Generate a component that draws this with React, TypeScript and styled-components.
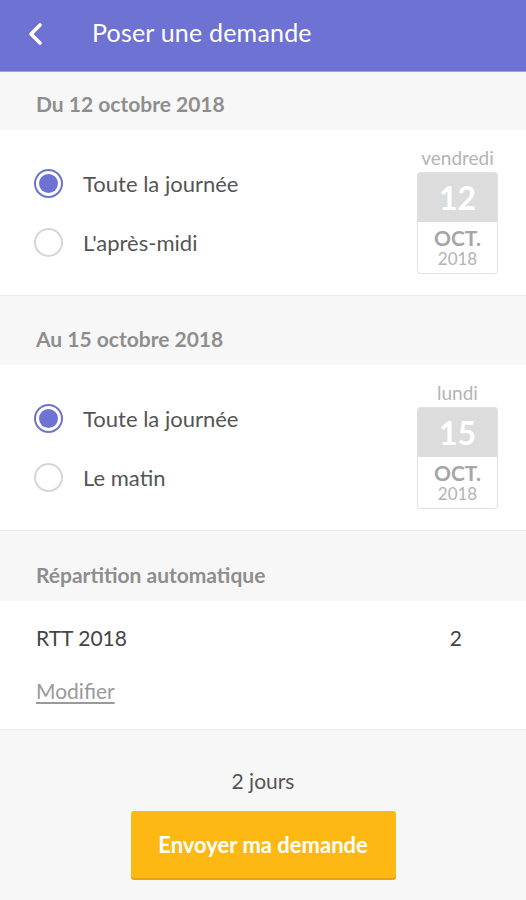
import React from "react";
import styled, { createGlobalStyle } from "styled-components";

const Global = createGlobalStyle`
  html, body { margin: 0; padding: 0; background: #f7f7f7; }
  body { font-family: "Lato", "Noto Sans", sans-serif; -webkit-font-smoothing: antialiased; }
  * { box-sizing: border-box; }
`;

const Page = styled.div`
  width: 526px;
  height: 900px;
  display: flex;
  flex-direction: column;
  background: #f7f7f7;
  overflow: hidden;
`;

const Header = styled.header`
  height: 72px;
  background: #6e72d2;
  border-bottom: 1px solid #9ea1e2;
  display: flex;
  align-items: center;
  padding-left: 26px;
  gap: 48px;
  color: #fff;
`;

const Title = styled.h1`
  margin: 0;
  font-size: 25px;
  font-weight: 400;
  letter-spacing: 0.2px;
  padding-bottom: 7px;
`;

const BackIcon = styled.svg`
  width: 18px;
  height: 24px;
  margin-bottom: 4px;
`;

const SectionTitle = styled.div<{ $h: number }>`
  height: ${(p) => p.$h}px;
  display: flex;
  align-items: flex-end;
  padding: 0 36px 14px;
  font-size: 21px;
  line-height: 24px;
  font-weight: 700;
  color: #8e8e8e;
`;

const DayCard = styled.section`
  background: #fff;
  height: 166px;
  display: flex;
  align-items: stretch;
  justify-content: space-between;
  padding: 0 28px 0 34px;
  border-bottom: 1px solid #ececec;
`;

const Options = styled.div`
  display: flex;
  flex-direction: column;
  justify-content: center;
  gap: 29px;
  padding-top: 1px;
`;

const Option = styled.label`
  display: flex;
  align-items: center;
  gap: 20px;
  font-size: 22px;
  color: #555;
  height: 30px;
`;

const Radio = styled.span<{ $checked?: boolean }>`
  width: 29px;
  height: 29px;
  border-radius: 50%;
  border: 2px solid ${(p) => (p.$checked ? "#6e72d2" : "#d6d6d6")};
  display: flex;
  align-items: center;
  justify-content: center;
  &::after {
    content: "";
    width: 19px;
    height: 19px;
    border-radius: 50%;
    background: ${(p) => (p.$checked ? "#6e72d2" : "transparent")};
  }
`;

const CalWrap = styled.div`
  display: flex;
  flex-direction: column;
  align-items: center;
  padding-top: 16px;
`;

const WeekDay = styled.div`
  font-size: 19px;
  color: #b4b4b4;
  line-height: 24px;
`;

const Cal = styled.div`
  width: 81px;
  border: 1px solid #e2e2e2;
  border-radius: 3px;
  overflow: hidden;
  margin-top: 2px;
  display: flex;
  flex-direction: column;
`;

const CalDay = styled.div`
  height: 49px;
  background: #dcdcdc;
  color: #fff;
  font-size: 32px;
  font-weight: 700;
  display: flex;
  align-items: center;
  justify-content: center;
`;

const CalMonth = styled.div`
  font-size: 21px;
  font-weight: 700;
  color: #a6a6a6;
  text-align: center;
  line-height: 22px;
  padding-top: 5px;
`;

const CalYear = styled.div`
  font-size: 17px;
  color: #b4b4b4;
  text-align: center;
  line-height: 20px;
  padding-bottom: 4px;
`;

const Split = styled.section`
  background: #fff;
  height: 129px;
  padding: 24px 64px 0 36px;
  display: flex;
  flex-direction: column;
  gap: 27px;
  border-bottom: 1px solid #ececec;
`;

const SplitRow = styled.div`
  display: flex;
  justify-content: space-between;
  font-size: 21px;
  line-height: 26px;
  color: #444;
`;

const Link = styled.a`
  font-size: 21px;
  line-height: 26px;
  color: #9a9a9a;
  text-decoration: underline;
  text-underline-offset: 3px;
`;

const Footer = styled.div`
  flex: 1;
  display: flex;
  flex-direction: column;
  align-items: center;
  padding-top: 38px;
`;

const Total = styled.div`
  font-size: 21px;
  color: #555;
  line-height: 26px;
`;

const Submit = styled.button`
  margin-top: 17px;
  width: 265px;
  height: 67px;
  border: none;
  border-radius: 3px;
  background: #fdb813;
  box-shadow: 0 2px 0 #eaa30a;
  color: #fff;
  font-family: inherit;
  font-size: 22px;
  font-weight: 700;
  padding-bottom: 2px;
`;

type Day = {
  title: string;
  options: { label: string; checked?: boolean }[];
  weekday: string;
  day: string;
};

const days: Day[] = [
  {
    title: "Du 12 octobre 2018",
    options: [{ label: "Toute la journée", checked: true }, { label: "L'après-midi" }],
    weekday: "vendredi",
    day: "12",
  },
  {
    title: "Au 15 octobre 2018",
    options: [{ label: "Toute la journée", checked: true }, { label: "Le matin" }],
    weekday: "lundi",
    day: "15",
  },
];

export default function App() {
  return (
    <Page>
      <Global />
      <Header>
        <BackIcon viewBox="0 0 18 24">
          <path d="M14 3 L5 12 L14 21" fill="none" stroke="#fff" strokeWidth="3.6" strokeLinecap="round" strokeLinejoin="round" />
        </BackIcon>
        <Title>Poser une demande</Title>
      </Header>
      {days.map((d, i) => (
        <React.Fragment key={d.title}>
          <SectionTitle $h={i === 0 ? 58 : 69}>{d.title}</SectionTitle>
          <DayCard>
            <Options>
              {d.options.map((o) => (
                <Option key={o.label}>
                  <Radio $checked={o.checked} />
                  {o.label}
                </Option>
              ))}
            </Options>
            <CalWrap>
              <WeekDay>{d.weekday}</WeekDay>
              <Cal>
                <CalDay>{d.day}</CalDay>
                <CalMonth>OCT.</CalMonth>
                <CalYear>2018</CalYear>
              </Cal>
            </CalWrap>
          </DayCard>
        </React.Fragment>
      ))}
      <SectionTitle $h={70}>Répartition automatique</SectionTitle>
      <Split>
        <SplitRow>
          <span>RTT 2018</span>
          <span>2</span>
        </SplitRow>
        <div>
          <Link>Modifier</Link>
        </div>
      </Split>
      <Footer>
        <Total>2 jours</Total>
        <Submit>Envoyer ma demande</Submit>
      </Footer>
    </Page>
  );
}
